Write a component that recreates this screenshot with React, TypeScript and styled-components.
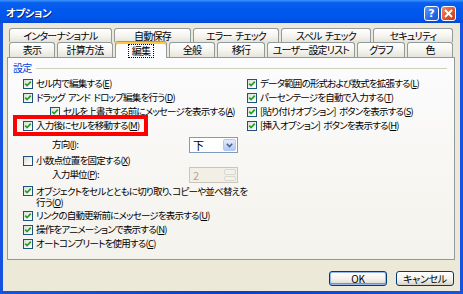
import React from 'react';
import styled, { createGlobalStyle, css } from 'styled-components';

const Global = createGlobalStyle`
  html, body { margin: 0; padding: 0; background: #ECE9D8; }
  body {
    font-family: "Noto Sans CJK JP", "Noto Sans", sans-serif;
    font-size: 9.5px;
    letter-spacing: -0.8px;
    word-spacing: 2px;
    color: #000;
    font-feature-settings: "palt" 1;
  }
  * { box-sizing: border-box; }
`;

const Window = styled.div`
  width: 463px;
  height: 294px;
  overflow: hidden;
  display: flex;
  flex-direction: column;
  background: #0A3ED0;
`;

const TitleBar = styled.div`
  height: 23px;
  flex: 0 0 23px;
  display: flex;
  align-items: center;
  padding: 4px 7px 0 6px;
  background: linear-gradient(180deg, #3D95FF 0%, #0A5FEE 12%, #0058EE 45%, #0056EA 80%, #0348D8 100%);
`;

const Title = styled.div`
  flex: 1;
  color: #fff;
  font-weight: bold;
  font-size: 10.5px;
  letter-spacing: -0.5px;
  line-height: 1;
  text-shadow: 1px 1px 0 #0F1E89;
`;

const CaptionButton = styled.div<{ $kind: 'help' | 'close' }>`
  width: 15px;
  height: 15px;
  margin-left: 2px;
  border: 1px solid #fff;
  border-radius: 3px;
  display: flex;
  align-items: center;
  justify-content: center;
  color: #fff;
  font-family: "DejaVu Sans", sans-serif;
  letter-spacing: 0;
  font-weight: bold;
  font-size: 11px;
  line-height: 1;
  ${p =>
    p.$kind === 'help'
      ? css`background: linear-gradient(135deg, #5C9BFF 0%, #2C6BEA 55%, #1A56D8 100%);`
      : css`background: linear-gradient(135deg, #F08A68 0%, #E0542C 55%, #C23C14 100%);`}
`;

const Frame = styled.div`
  flex: 1;
  min-height: 0;
  display: flex;
  padding: 0 3px 3px 3px;
  background: linear-gradient(90deg, #1653E0, #0A3ED0 50%, #1653E0);
`;

const Body = styled.div`
  flex: 1;
  min-width: 0;
  display: flex;
  flex-direction: column;
  background: #ECE9D8;
  padding: 5px 5px 5px 4px;
`;

const TabStrip = styled.div`
  display: flex;
  flex-direction: column;
  padding: 0 2px;
`;

const TabRow = styled.div<{ $h: number }>`
  display: flex;
  gap: 2px;
  height: ${p => p.$h}px;
`;

const Tab = styled.div<{ $w: number; $sel?: boolean }>`
  width: ${p => p.$w}px;
  flex: 0 0 ${p => p.$w}px;
  border: 1px solid #919B9C;
  border-bottom: none;
  border-radius: 3px 3px 0 0;
  background: linear-gradient(180deg, #FFFFFF 0%, #F6F5F1 50%, #E6E4DA 100%);
  display: flex;
  align-items: center;
  justify-content: center;
  font-size: 10px;
  letter-spacing: -0.8px;
  line-height: 1;
  white-space: nowrap;
  ${p =>
    p.$sel &&
    css`
      position: relative;
      z-index: 1;
      margin: -1px 0 -1px 0;
      border-top: 1px solid #E68B2C;
      box-shadow: inset 0 2px 0 #FFC83C;
      background: #FCFCFE;
      padding-top: 2px;
    `}
`;

const FocusLabel = styled.span`
  outline: 1px dotted #000;
  outline-offset: 1px;
  padding: 0 2px;
`;

const Panel = styled.div`
  flex: 0 0 203px;
  height: 203px;
  min-width: 0;
  border: 1px solid #919B9C;
  background: linear-gradient(180deg, #FCFCFE 0%, #F7F6F2 60%, #F3F2EC 100%);
  padding: 4px 7px 0 5px;
  display: flex;
  flex-direction: column;
`;

const GroupHeader = styled.div`
  height: 12px;
  display: flex;
  align-items: center;
  gap: 5px;
  color: #0046D5;
  font-size: 10px;
  line-height: 1;
  &::after {
    content: '';
    flex: 1;
    height: 1px;
    background: #D0D0BF;
  }
`;

const Columns = styled.div`
  display: grid;
  grid-template-columns: 224px minmax(0, 1fr);
  margin: 3px 0 0 10px;
`;

const Column = styled.div`
  display: flex;
  flex-direction: column;
  min-width: 0;
`;

const Row = styled.div<{ $h?: number; $mt?: number; $indent?: number }>`
  height: ${p => p.$h ?? 14}px;
  margin-top: ${p => p.$mt ?? 0}px;
  padding-left: ${p => p.$indent ?? 0}px;
  display: flex;
  align-items: center;
  white-space: nowrap;
  line-height: 1;
  position: relative;
`;

const WrapRow = styled.div<{ $mt?: number }>`
  margin-top: ${p => p.$mt ?? 0}px;
  display: flex;
  align-items: flex-start;
  line-height: 11px;
  white-space: nowrap;
`;

const Box = styled.span`
  flex: 0 0 10px;
  width: 10px;
  height: 10px;
  margin-right: 3px;
  border: 1px solid #1C5180;
  background: linear-gradient(135deg, #DCDCD7 0%, #F4F4F0 60%, #FFFFFF 100%);
  display: inline-flex;
  align-items: center;
  justify-content: center;
`;

const Highlight = styled.div`
  position: absolute;
  left: -10px;
  top: -4px;
  width: 135px;
  height: 21px;
  border: 4px solid #FF0000;
  pointer-events: none;
`;

const FieldLabel = styled.span<{ $w: number }>`
  width: ${p => p.$w}px;
  flex: 0 0 ${p => p.$w}px;
`;

const Select = styled.div`
  width: 49px;
  height: 16px;
  border: 1px solid #7F9DB9;
  background: #fff;
  display: flex;
  align-items: center;
  padding: 1px 1px 1px 3px;
`;

const SelectText = styled.span`
  flex: 1;
  font-size: 11px;
`;

const DropButton = styled.span`
  width: 13px;
  height: 12px;
  border: 1px solid #B5C8F2;
  border-radius: 2px;
  background: linear-gradient(180deg, #E3EBFE 0%, #C7D6F8 60%, #B3C7F2 100%);
  display: flex;
  align-items: center;
  justify-content: center;
`;

const Spin = styled.div`
  width: 49px;
  height: 16px;
  border: 1px solid #C9C7BA;
  background: #F1EFE6;
  display: flex;
  align-items: center;
  padding: 1px 1px 1px 3px;
  color: #ACA899;
`;

const SpinButtons = styled.span`
  width: 12px;
  height: 12px;
  display: flex;
  flex-direction: column;
  gap: 1px;
`;

const SpinHalf = styled.span`
  flex: 1;
  border: 1px solid #DAD8CE;
  border-radius: 2px;
  background: #F3F3EE;
`;

const ButtonRow = styled.div`
  display: flex;
  justify-content: flex-end;
  gap: 9px;
  margin-top: 11px;
  padding-right: 1px;
`;

const Button = styled.div<{ $default?: boolean }>`
  width: 58px;
  height: 15px;
  border: 1px solid #003C74;
  border-radius: 3px;
  background: linear-gradient(180deg, #FFFFFF 0%, #F4F3EE 50%, #E3E0D6 85%, #D6D0C5 100%);
  display: flex;
  align-items: center;
  justify-content: center;
  font-size: 10px;
  line-height: 1;
  letter-spacing: -0.3px;
  ${p => p.$default && css`box-shadow: inset 0 0 0 1px #98B8EA, inset 0 -1px 0 1px #6C93D6;`}
`;

const Check = ({ on = true }: { on?: boolean }) => (
  <Box>
    {on && (
      <svg width="8" height="8" viewBox="0 0 8 8">
        <path d="M1.2 3.6 L3.1 5.6 L6.8 1.6" fill="none" stroke="#21A121" strokeWidth="1.7" />
      </svg>
    )}
  </Box>
);

const Key = ({ k }: { k: string }) => (
  <>
    (<u>{k}</u>)
  </>
);

const row1 = [
  { label: 'インターナショナル', w: 103 },
  { label: '自動保存', w: 77 },
  { label: 'エラー チェック', w: 86 },
  { label: 'スペル チェック', w: 90 },
  { label: 'セキュリティ', w: 80 },
];

const row2 = [
  { label: '表示', w: 46 },
  { label: '計算方法', w: 56 },
  { label: '編集', w: 52, sel: true },
  { label: '全般', w: 46 },
  { label: '移行', w: 48 },
  { label: 'ユーザー設定リスト', w: 88 },
  { label: 'グラフ', w: 48 },
  { label: '色', w: 46 },
];

export default function App() {
  return (
    <>
      <Global />
      <Window>
        <TitleBar>
          <Title>オプション</Title>
          <CaptionButton $kind="help">?</CaptionButton>
          <CaptionButton $kind="close">
            <svg width="9" height="9" viewBox="0 0 9 9">
              <path d="M1 1 L8 8 M8 1 L1 8" stroke="#fff" strokeWidth="1.8" />
            </svg>
          </CaptionButton>
        </TitleBar>
        <Frame>
          <Body>
            <TabStrip>
              <TabRow $h={14}>
                {row1.map(t => (
                  <Tab key={t.label} $w={t.w}>{t.label}</Tab>
                ))}
              </TabRow>
              <TabRow $h={15}>
                {row2.map(t => (
                  <Tab key={t.label} $w={t.w} $sel={t.sel}>
                    {t.sel ? <FocusLabel>{t.label}</FocusLabel> : t.label}
                  </Tab>
                ))}
              </TabRow>
            </TabStrip>
            <Panel>
              <GroupHeader>設定</GroupHeader>
              <Columns>
                <Column>
                  <Row><Check />セル内で編集する<Key k="E" /></Row>
                  <Row><Check />ドラッグ アンド ドロップ編集を行う<Key k="D" /></Row>
                  <Row $indent={27}><Check />セルを上書きする前にメッセージを表示する<Key k="A" /></Row>
                  <Row>
                    <Check />入力後にセルを移動する<Key k="M" />
                    <Highlight />
                  </Row>
                  <Row $h={16} $mt={4} $indent={29}>
                    <FieldLabel $w={137}>方向<Key k="I" />:</FieldLabel>
                    <Select>
                      <SelectText>下</SelectText>
                      <DropButton>
                        <svg width="7" height="5" viewBox="0 0 7 5">
                          <path d="M0.8 0.8 L3.5 3.6 L6.2 0.8" fill="none" stroke="#4D6185" strokeWidth="1.6" />
                        </svg>
                      </DropButton>
                    </Select>
                  </Row>
                  <Row $h={12} $mt={2}><Check on={false} />小数点位置を固定する<Key k="X" /></Row>
                  <Row $h={16} $indent={29}>
                    <FieldLabel $w={137}>入力単位<Key k="P" />:</FieldLabel>
                    <Spin>
                      <SelectText>2</SelectText>
                      <SpinButtons>
                        <SpinHalf />
                        <SpinHalf />
                      </SpinButtons>
                    </Spin>
                  </Row>
                  <WrapRow $mt={3}>
                    <Check />
                    <span>
                      オブジェクトをセルとともに切り取り、コピーや並べ替えを
                      <br />
                      行う<Key k="O" />
                    </span>
                  </WrapRow>
                  <Row $mt={1}><Check />リンクの自動更新前にメッセージを表示する<Key k="U" /></Row>
                  <Row><Check />操作をアニメーションで表示する<Key k="N" /></Row>
                  <Row><Check />オートコンプリートを使用する<Key k="C" /></Row>
                </Column>
                <Column>
                  <Row><Check />データ範囲の形式および数式を拡張する<Key k="L" /></Row>
                  <Row><Check />パーセンテージを自動で入力する<Key k="T" /></Row>
                  <Row><Check />[貼り付けオプション] ボタンを表示する<Key k="S" /></Row>
                  <Row><Check />[挿入オプション] ボタンを表示する<Key k="H" /></Row>
                </Column>
              </Columns>
            </Panel>
            <ButtonRow>
              <Button $default>OK</Button>
              <Button>キャンセル</Button>
            </ButtonRow>
          </Body>
        </Frame>
      </Window>
    </>
  );
}
